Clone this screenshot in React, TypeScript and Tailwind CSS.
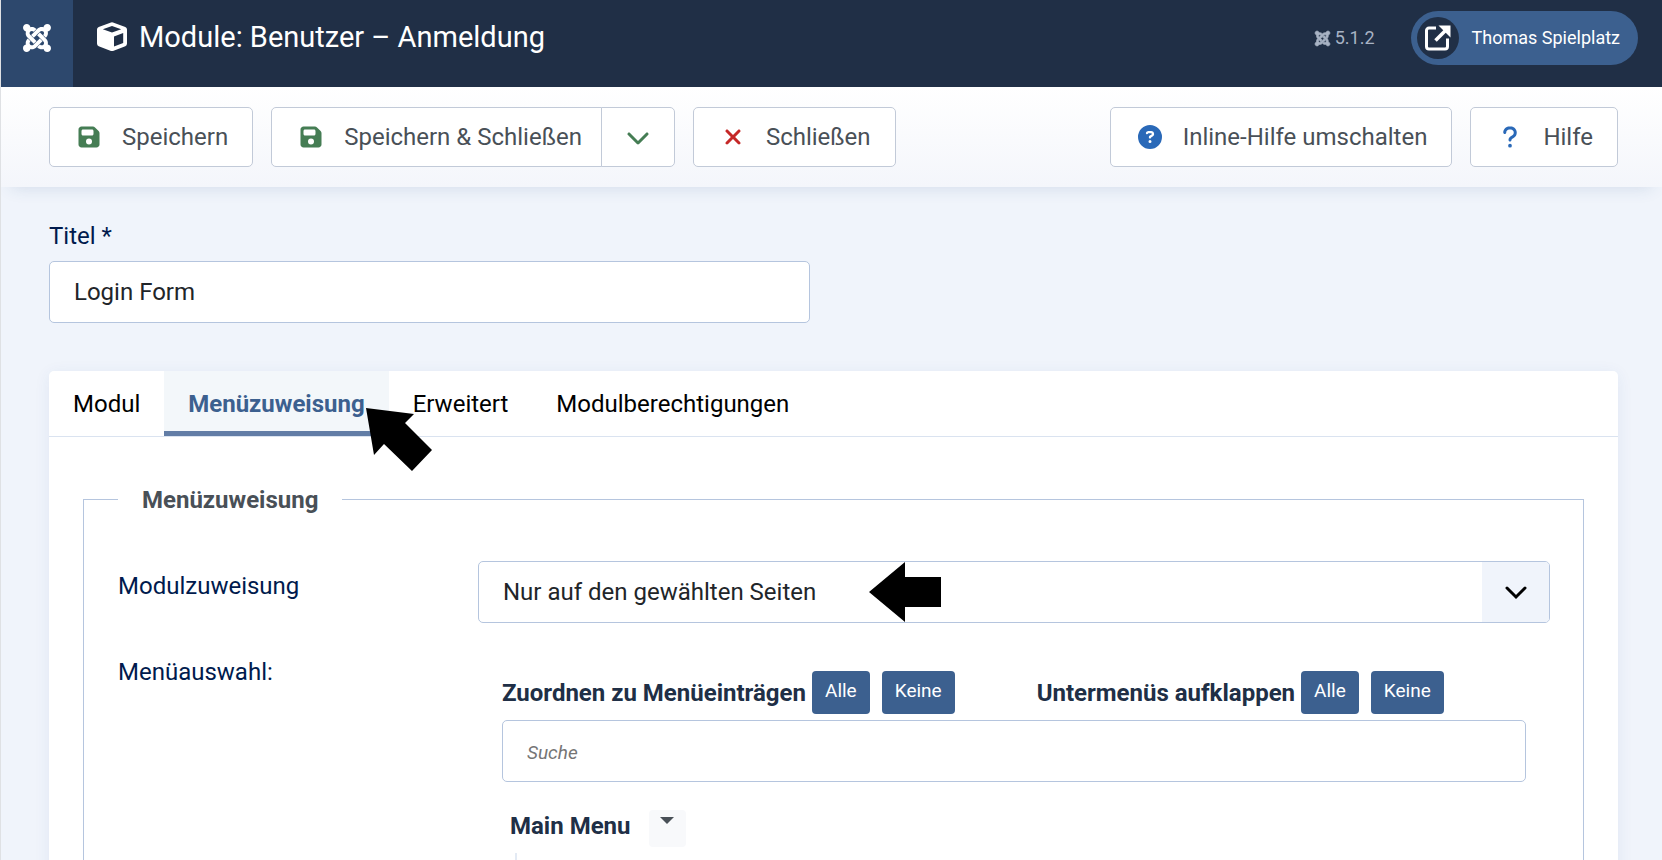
import { useState } from "react";
import type { ReactNode } from "react";
import {
  FaChevronDown,
  FaCircleQuestion,
  FaFloppyDisk,
  FaJoomla,
  FaQuestion,
  FaXmark,
} from "react-icons/fa6";

const tabs = ["Modul", "Menüzuweisung", "Erweitert", "Modulberechtigungen"];

function ToolbarButton({ icon, children, className = "rounded-[5px] px-6" }: { icon: ReactNode; children: ReactNode; className?: string }) {
  return (
    <button type="button" className={`flex h-[60px] items-center gap-[18px] border border-[#c2cad8] bg-white text-[#495057] ${className}`}>
      <span className="flex w-[30px] justify-center">{icon}</span>
      {children}
    </button>
  );
}

function SmallButton({ children }: { children: ReactNode }) {
  return (
    <button type="button" className="h-[43px] rounded bg-[#3c608f] px-[13px] pb-[3px] text-[19px] text-white">
      {children}
    </button>
  );
}

function CubeIcon() {
  return (
    <svg viewBox="0 0 30 30" className="size-[30px]" fill="currentColor" fillRule="evenodd">
      <path d="M14 .5Q15 .1 16 .5L28.3 5Q30 5.7 30 7.5V21.5Q30 23.5 28.3 24.2L16 28.9Q15 29.3 14 28.9L1.7 24.2Q0 23.5 0 21.5V7.5Q0 5.7 1.7 5ZM15 3.9 5.8 7.2 15 10.5 24.2 7.2ZM17 14.5V24.5L26.2 20.9V10.9Z" />
    </svg>
  );
}

function OpenIcon() {
  return (
    <svg viewBox="0 0 26 26" className="size-[26px]" fill="none" stroke="currentColor" strokeWidth="3">
      <path d="M11 3H4a2.5 2.5 0 0 0-2.5 2.5V21.5a2.500 2.500 0 0 0 2.500 2.500h16a2.500 2.500 0 0 0 2.500-2.500v-8" />
      <path d="M10.5 15.5 20 6" strokeWidth="3.6" />
      <path d="M13.5.5H25.5v12z" fill="currentColor" stroke="none" />
    </svg>
  );
}

export default function App() {
  const [active, setActive] = useState("Menüzuweisung");
  const [title, setTitle] = useState("Login Form");

  return (
    <div className="h-screen overflow-hidden border-l border-[#dfe1e4] bg-[#f0f4fb] font-['Roboto',sans-serif] text-[24px] leading-[36px] text-[#212529]">
      <header className="flex h-[87px] bg-[#202f46] text-white">
        <a href="#" aria-label="Joomla" className="flex w-[72px] justify-center bg-[#2d486d] pt-[22px]">
          <FaJoomla className="size-[32px]" />
        </a>
        <h1 className="flex h-[74px] items-center gap-3 pl-6 text-[29px]">
          <CubeIcon />
          Module: Benutzer – Anmeldung
        </h1>
        <div className="ml-auto flex h-[76px] items-center gap-9 pr-6">
          <span className="flex items-center gap-1 text-[18px] text-[#a8b3c4]">
            <FaJoomla className="size-[17px] stroke-current stroke-[20]" />
            5.1.2
          </span>
          <a href="#" className="flex h-[54px] items-center gap-[13px] rounded-full bg-[#3c608f] pr-[18px] pl-[6px] text-[18px]">
            <span className="flex size-[42px] items-center justify-center rounded-full bg-[#202f46]">
              <OpenIcon />
            </span>
            Thomas Spielplatz
          </a>
        </div>
      </header>

      {/* Toolbar */}
      <div className="flex h-[100px] items-center gap-[18px] bg-gradient-to-b from-white to-[#f4f6fb] pr-[44px] pl-12 shadow-[0_10px_16px_-10px_rgba(40,80,130,0.16)]">
        <ToolbarButton icon={<FaFloppyDisk className="size-[24px] text-[#457d54]" />}>Speichern</ToolbarButton>
        <div className="flex">
          <ToolbarButton className="rounded-l-[5px] pr-[19px] pl-6" icon={<FaFloppyDisk className="size-[24px] text-[#457d54]" />}>
            Speichern &amp; Schließen
          </ToolbarButton>
          <button type="button" aria-label="Weitere Aktionen" className="-ml-px flex w-[74px] items-center justify-center rounded-r-[5px] border border-[#c2cad8] bg-white text-[#457d54]">
            <FaChevronDown className="size-[24px]" />
          </button>
        </div>
        <ToolbarButton icon={<FaXmark className="size-[24px] text-[#c52827]" />}>Schließen</ToolbarButton>
        <div className="ml-auto flex gap-[18px]">
          <ToolbarButton icon={<FaCircleQuestion className="size-[24px] text-[#2a69b8]" />}>Inline-Hilfe umschalten</ToolbarButton>
          <ToolbarButton icon={<FaQuestion className="size-[24px] text-[#2a69b8]" />}>Hilfe</ToolbarButton>
        </div>
      </div>

      <main className="pt-[31px] pr-[44px] pl-12">
        <label htmlFor="title" className="block text-[#001a4d]">Titel *</label>
        <input
          id="title"
          value={title}
          onChange={(e) => setTitle(e.target.value)}
          className="mt-[7px] block h-[62px] w-[761px] max-w-full rounded-[5px] border border-[#b5c5de] bg-white px-6 outline-none"
        />

        <section className="mt-12 rounded-t-[5px] bg-white shadow-[0_3px_16px_rgba(40,80,150,0.08)]">
          <div role="tablist" className="flex h-[66px] border-b border-[#dae3f0] text-black">
            {tabs.map((tab) => (
              <div key={tab} className="relative flex">
                <button
                  type="button"
                  role="tab"
                  aria-selected={active === tab}
                  onClick={() => setActive(tab)}
                  className={`border-b-[5px] px-6 pt-[5px] ${active === tab ? "border-[#627da6] bg-[#f3f7fa] font-bold text-[#3c608f]" : "border-transparent"}`}
                >
                  {tab}
                </button>
                {tab === "Menüzuweisung" && (
                  <svg viewBox="0 0 66 63" className="pointer-events-none absolute top-[37px] left-[202px] z-10 h-[63px] w-[66px]" fill="black">
                    <path d="M0 0 48 6 39 15 66 42 46 63 18 36 8 47z" />
                  </svg>
                )}
              </div>
            ))}
          </div>

          <div className="px-[34px] pt-[43px]">
            <fieldset className="h-[600px] border border-[#b5c5de] pr-[33px] pl-[34px]">
              <legend className="px-6 pt-[2px] font-bold text-[#495057]">Menüzuweisung</legend>

              <div className="mt-[43px] flex">
                <label htmlFor="assignment" className="w-[360px] shrink-0 pt-[7px] text-[#001a4d]">Modulzuweisung</label>
                <div className="relative flex-1">
                  <select id="assignment" className="h-[62px] w-full appearance-none rounded-[5px] border border-[#b5c5de] bg-white px-6 outline-none">
                    <option>Nur auf den gewählten Seiten</option>
                    <option>Auf allen Seiten</option>
                    <option>Keine Seite</option>
                  </select>
                  <span className="pointer-events-none absolute inset-y-px right-px flex w-[67px] items-center justify-center rounded-r bg-[#f0f4fb] pt-[2px] text-black">
                    <svg viewBox="0 0 22 14" className="w-[22px]" fill="none" stroke="currentColor" strokeWidth="3" strokeLinecap="round">
                      <path d="m2 2 9 9 9-9" />
                    </svg>
                  </span>
                  <svg viewBox="0 0 72 60" className="pointer-events-none absolute top-px left-[391px] h-[60px] w-[72px]" fill="black">
                    <path d="M0 30 36 0V15H72V45H36V60z" />
                  </svg>
                </div>
              </div>

              <div className="mt-6 flex">
                <span className="w-[384px] shrink-0 pt-[7px] text-[#001a4d]">Menüauswahl:</span>
                <div className="flex-1 pt-6 pr-6">
                  <div className="flex flex-wrap gap-x-[82px] font-bold text-[#202f46]">
                    {["Zuordnen zu Menüeinträgen", "Untermenüs aufklappen"].map((group) => (
                      <div key={group} className="flex items-center gap-[6px]">
                        {group}
                        <div className="flex gap-3 font-normal">
                          <SmallButton>Alle</SmallButton>
                          <SmallButton>Keine</SmallButton>
                        </div>
                      </div>
                    ))}
                  </div>
                  <input
                    type="search"
                    aria-label="Suche"
                    placeholder="Suche"
                    className="mt-[6px] block h-[62px] w-full rounded-[5px] border border-[#b5c5de] bg-white px-6 pt-[2px] text-[19px] outline-none placeholder:text-[#757575] placeholder:italic"
                  />
                  <div className="mt-7 flex gap-[18px] pl-2 leading-8 font-bold text-[#202f46]">
                    Main Menu
                    <button type="button" aria-label="Main Menu Optionen" className="flex size-[37px] justify-center rounded bg-[#f8f9fb] pt-[7px] text-[#495057]">
                      <svg viewBox="0 0 14 7" className="h-[7px] w-[14px]" fill="currentColor">
                        <path d="M0 0h14L7 7z" />
                      </svg>
                    </button>
                  </div>
                  <div className="mt-[6px] ml-[13px] h-10 border-l-2 border-[#e3eaf4]" />
                </div>
              </div>
            </fieldset>
          </div>
        </section>
      </main>
    </div>
  );
}
